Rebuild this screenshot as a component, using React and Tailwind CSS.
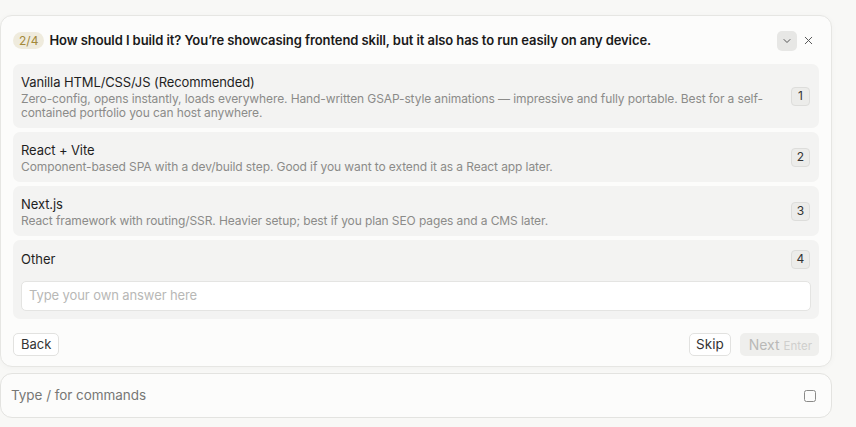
import { ChevronDown, X } from 'lucide-react'

const options = [
  {
    n: 1,
    title: 'Vanilla HTML/CSS/JS (Recommended)',
    desc: 'Zero-config, opens instantly, loads everywhere. Hand-written GSAP-style animations — impressive and fully portable. Best for a self-contained portfolio you can host anywhere.',
  },
  {
    n: 2,
    title: 'React + Vite',
    desc: 'Component-based SPA with a dev/build step. Good if you want to extend it as a React app later.',
  },
  {
    n: 3,
    title: 'Next.js',
    desc: 'React framework with routing/SSR. Heavier setup; best if you plan SEO pages and a CMS later.',
  },
]

function NumKey({ n }) {
  return (
    <span className="shrink-0 w-[19px] h-[19px] rounded-[4px] border border-[#dddddb] bg-[#ececea] flex items-center justify-center text-[12px] text-[#333]">
      {n}
    </span>
  )
}

export default function App() {
  return (
    <div className="min-h-[427px] bg-[#f8f8f6] pt-[15px] pr-[24px] font-['Inter',sans-serif] text-[#1a1a1a]">
      {/* Question card */}
      <div className="w-[832px] rounded-[12px] border border-[#e6e6e3] bg-[#fcfcfb] px-[12px] pt-[14px] pb-[10px] shadow-[0_1px_6px_rgba(0,0,0,0.03)]">
        <div className="flex items-center h-[21px] mb-[13px]">
          <span className="rounded-full bg-[#efebdd] text-[#a3893a] text-[12px] leading-[17px] px-[6px]">2/4</span>
          <p className="ml-[5px] text-[13px] font-semibold tracking-[-0.08px]">
            How should I build it? You’re showcasing frontend skill, but it also has to run easily on any device.
          </p>
          <div className="ml-auto flex items-center gap-[5px] mr-[4px]">
            <button className="w-[20px] h-[20px] rounded-[5px] bg-[#e7e7e5] flex items-center justify-center">
              <ChevronDown className="w-[12px] h-[12px] text-[#555]" strokeWidth={2} />
            </button>
            <X className="w-[13px] h-[13px] text-[#555]" strokeWidth={1.8} />
          </div>
        </div>

        <div className="flex flex-col gap-[4px]">
          {options.map(o => (
            <div key={o.n} className="flex items-center rounded-[7px] bg-[#f3f3f2] pl-[8px] pr-[9px] py-[8px]">
              <div className="flex-1 pr-[20px]">
                <p className="text-[13px] leading-[20px] text-[#1f1f1f] tracking-[-0.1px]">{o.title}</p>
                <p className="text-[12px] leading-[14px] text-[#8b8b89] tracking-[-0.1px]">{o.desc}</p>
              </div>
              <NumKey n={o.n} />
            </div>
          ))}
          <div className="rounded-[7px] bg-[#f3f3f2] px-[8px] pt-[9px] pb-[8px]">
            <div className="flex items-center pr-[1px]">
              <p className="flex-1 text-[13px] leading-[20px] text-[#1f1f1f]">Other</p>
              <NumKey n={4} />
            </div>
            <div className="mt-[12px] h-[30px] rounded-[5px] border border-[#e4e4e2] bg-white flex items-center px-[7px]">
              <span className="text-[13px] text-[#b8b8b6] tracking-[-0.1px]">Type your own answer here</span>
            </div>
          </div>
        </div>

        <div className="flex items-center mt-[14px]">
          <button className="h-[23px] px-[7px] rounded-[5px] border border-[#e2e2e0] bg-white text-[13px] text-[#333]">Back</button>
          <button className="ml-auto h-[23px] px-[6px] rounded-[5px] border border-[#e2e2e0] bg-white text-[13.5px] text-[#333]">Skip</button>
          <button className="ml-[9px] h-[23px] pl-[9px] pr-[7px] rounded-[5px] bg-[#efefed] flex items-baseline gap-[4px]">
            <span className="text-[14px] leading-[23px] text-[#b9b9b7]">Next</span>
            <span className="text-[11.5px] text-[#cfcfcd]">Enter</span>
          </button>
        </div>
      </div>

      {/* Command input */}
      <div className="mt-[6px] w-[832px] h-[45px] rounded-[12px] border border-[#e3e3e0] bg-[#fcfcfb] flex items-center px-[10px]">
        <span className="flex-1 text-[13.5px] text-[#777775] tracking-[-0.05px]">Type / for commands</span>
        <span className="w-[12px] h-[12px] mr-[5px] rounded-[2.5px] border-[1.6px] border-[#8a8a88]" />
      </div>
    </div>
  )
}
